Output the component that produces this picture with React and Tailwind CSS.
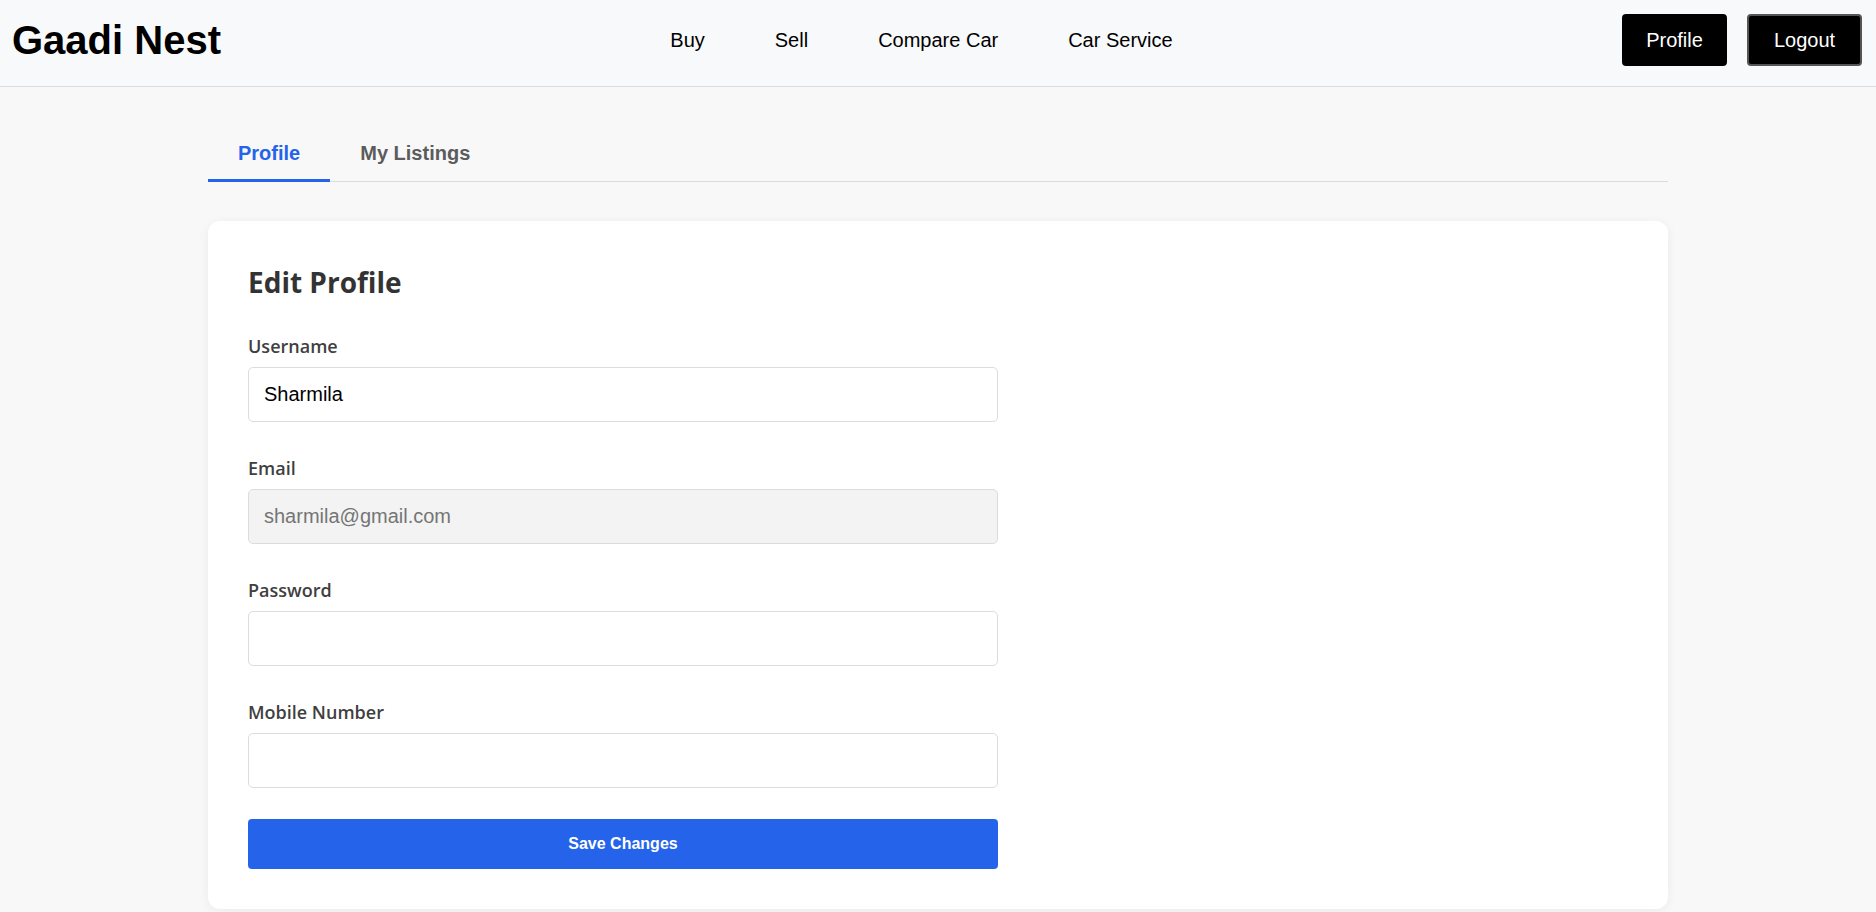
import { useState } from 'react';

const navLinks = ['Buy', 'Sell', 'Compare Car', 'Car Service'];

const Field = ({ label, type = 'text', value, onChange, disabled }) => (
  <div className="flex flex-col">
    <label className="mb-[9px] text-[18px] leading-6 font-semibold text-[#3f3f3f] font-['Open_Sans',sans-serif]">
      {label}
    </label>
    <input
      type={type}
      value={value}
      onChange={onChange}
      disabled={disabled}
      className={`w-[750px] h-[55px] px-[15px] rounded-[5px] border border-[#dcdcdc] text-[20px] font-['Liberation_Sans',Arial,sans-serif] focus:outline-none ${
        disabled ? 'bg-[#f3f3f3] text-[#757575]' : 'bg-white text-black'
      }`}
    />
  </div>
);

const App = () => {
  const [tab, setTab] = useState('profile');
  const [form, setForm] = useState({ username: 'Sharmila', password: '', mobile: '' });

  return (
    <div className="min-h-screen bg-[#f8f8f8] font-['Liberation_Sans',Arial,sans-serif]">
      {/* Top navigation */}
      <header className="h-[87px] bg-[#f8f9fa] border-b border-[#dcdcdc] flex items-center justify-between pl-[12px] pr-[14px] pb-[6px]">
        <h1 className="text-[40px] font-bold text-black leading-none">Gaadi Nest</h1>
        <nav className="flex items-center gap-[70px]">
          {navLinks.map((link) => (
            <a key={link} href="#" className="text-[20px] text-black">
              {link}
            </a>
          ))}
        </nav>
        <div className="flex items-center gap-[20px]">
          <button className="w-[105px] h-[52px] bg-black text-white text-[20px] rounded-[4px] border-2 border-black">
            Profile
          </button>
          <button className="w-[115px] h-[52px] bg-black text-white text-[20px] rounded-[4px] border-2 border-[#555]">
            Logout
          </button>
        </div>
      </header>

      <main className="w-[1460px] mx-auto pt-[41px]">
        {/* Tabs */}
        <div className="flex border-b border-[#dcdcdc]">
          <button
            onClick={() => setTab('profile')}
            className={`px-[30px] pt-[14px] pb-[14px] text-[20px] leading-[23px] font-bold border-b-[3px] -mb-px ${
              tab === 'profile' ? 'text-[#2563eb] border-[#2563eb]' : 'text-[#5c5c5c] border-transparent'
            }`}
          >
            Profile
          </button>
          <button
            onClick={() => setTab('listings')}
            className={`px-[30px] pt-[14px] pb-[14px] text-[20px] leading-[23px] font-bold border-b-[3px] -mb-px ${
              tab === 'listings' ? 'text-[#2563eb] border-[#2563eb]' : 'text-[#5c5c5c] border-transparent'
            }`}
          >
            My Listings
          </button>
        </div>

        {/* Edit profile card */}
        <section className="mt-[39px] bg-white rounded-[12px] shadow-[0_2px_12px_rgba(0,0,0,0.06)] p-[40px]">
          <h2 className="text-[28px] leading-[42px] font-bold text-[#333] font-['Open_Sans',sans-serif] mb-[31px]">
            Edit Profile
          </h2>
          <div className="flex flex-col gap-[34px]">
            <Field
              label="Username"
              value={form.username}
              onChange={(e) => setForm({ ...form, username: e.target.value })}
            />
            <Field label="Email" value="sharmila@gmail.com" disabled />
            <Field
              label="Password"
              type="password"
              value={form.password}
              onChange={(e) => setForm({ ...form, password: e.target.value })}
            />
            <Field
              label="Mobile Number"
              value={form.mobile}
              onChange={(e) => setForm({ ...form, mobile: e.target.value })}
            />
          </div>
          <button className="mt-[31px] w-[750px] h-[50px] bg-[#2563eb] text-white text-[16px] font-bold rounded-[4px]">
            Save Changes
          </button>
        </section>
      </main>
    </div>
  );
};

export default App;
